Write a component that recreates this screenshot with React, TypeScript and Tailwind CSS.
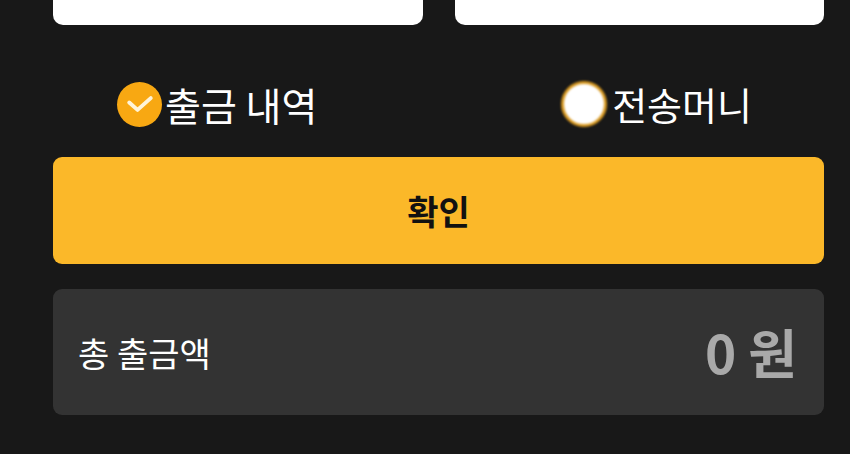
import React from "react";

const font = { fontFamily: '"Noto Sans CJK KR", "Noto Sans", sans-serif' };

function CheckedDot() {
  return (
    <span className="block h-[45px] w-[45px] shrink-0 rounded-full bg-[#f8a812]">
      <svg width="45" height="45" viewBox="0 0 46 46" fill="none">
        <path d="M12.5 21l8.5 7.5 13.5-12" stroke="#fff4d8" strokeWidth="4" strokeLinecap="round" strokeLinejoin="round" />
      </svg>
    </span>
  );
}

function EmptyDot() {
  return (
    <span className="block h-[46px] w-[46px] shrink-0 rounded-full border-[3px] border-[#d99a22] bg-white blur-[0.8px]" />
  );
}

export default function App() {
  return (
    <div className="h-[454px] w-[850px] overflow-hidden bg-[#181818]" style={font}>
      <div className="ml-[53px] w-[771px]">
        <div className="-mt-[35px] grid grid-cols-2 gap-[32px]">
          <div className="h-[60px] rounded-[10px] bg-white" />
          <div className="h-[60px] rounded-[10px] bg-white" />
        </div>

        <div className="flex h-[132px] items-center justify-between pl-[64px] pr-[72px] pt-[26px]">
          <label className="flex items-center gap-[3px] text-[39px] leading-none text-white">
            <CheckedDot />
            <span>출금 내역</span>
          </label>
          <label className="flex items-center gap-[5px] text-[38px] leading-none text-white">
            <EmptyDot />
            <span>전송머니</span>
          </label>
        </div>

        <button className="flex h-[107px] w-full items-center justify-center rounded-[9px] bg-[#fbb829] text-[34px] font-bold text-[#111111]">
          확인
        </button>

        <div className="mt-[25px] flex h-[126px] items-center justify-between rounded-[9px] bg-[#333333] pl-[25px] pr-[27px]">
          <span className="text-[34px] text-white">총 출금액</span>
          <span className="text-[53px] font-bold text-[#a9a9a9]">0 원</span>
        </div>
      </div>
    </div>
  );
}
